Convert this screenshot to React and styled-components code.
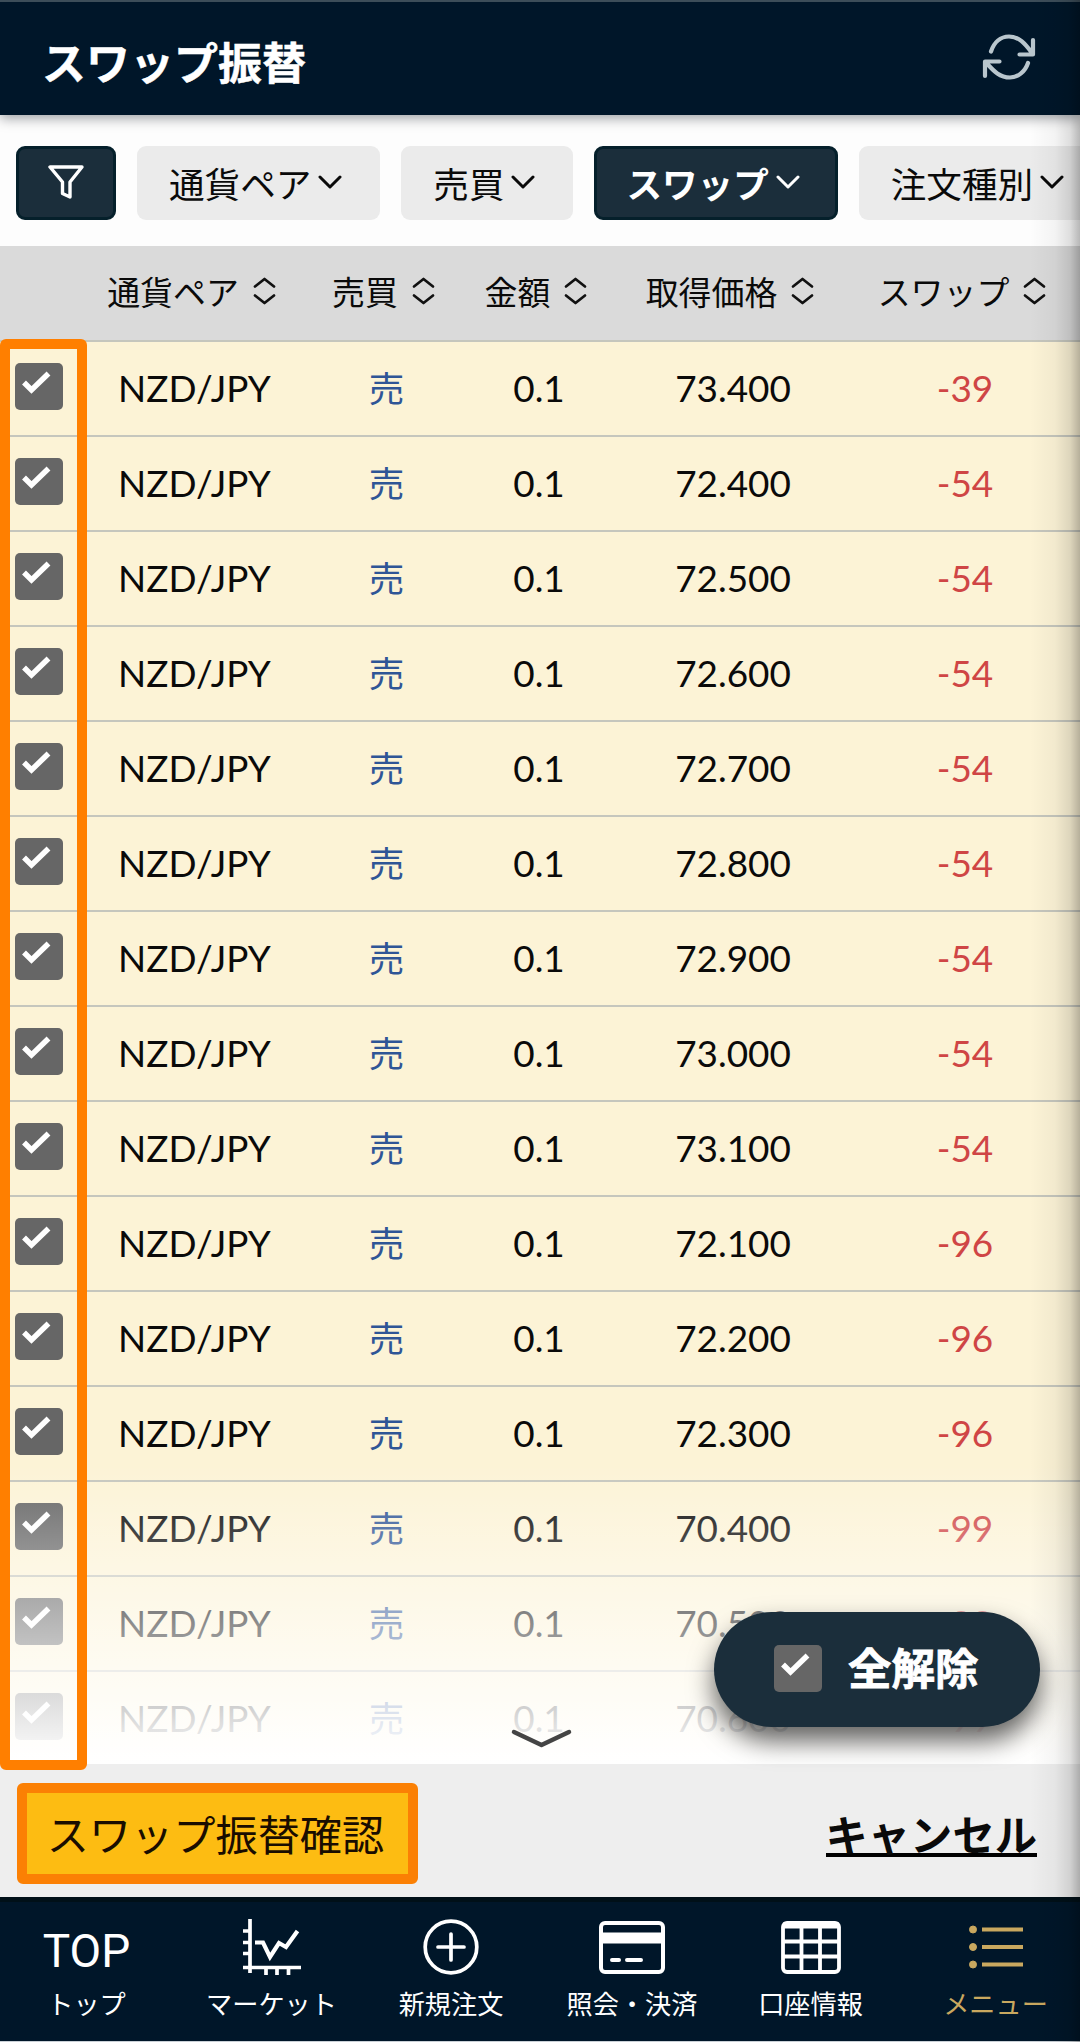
import styled, { createGlobalStyle, css } from "styled-components";

const GlobalStyle = createGlobalStyle`
  * {
    box-sizing: border-box;
  }
  body {
    margin: 0;
    background: #fdfdfd;
    font-family: Lato, "Noto Sans CJK JP", sans-serif;
    color: #0a0a0a;
  }
  button {
    font-family: inherit;
    border: none;
    padding: 0;
    margin: 0;
  }
  svg {
    display: block;
    flex: none;
  }
`;

const Screen = styled.div`
  position: relative;
  width: 1080px;
  height: 2042px;
  overflow: hidden;
  display: flex;
  flex-direction: column;
`;

// soft shade along the right side of the phone screen
const EdgeShade = styled.div`
  position: absolute;
  top: 0;
  right: 0;
  bottom: 0;
  width: 50px;
  pointer-events: none;
  background: linear-gradient(
    to right,
    rgba(0, 0, 0, 0) 0%,
    rgba(0, 0, 0, 0.04) 50%,
    rgba(0, 0, 0, 0.12) 80%,
    rgba(0, 0, 0, 0.28) 100%
  );
`;

// * header
const Header = styled.header`
  position: relative;
  height: 115px;
  flex: none;
  display: flex;
  justify-content: space-between;
  align-items: center;
  padding: 0 44px 4px 42px;
  background: #001629;
  border-top: 2px solid #3c4d59;
  box-shadow: 0 3px 12px rgba(0, 10, 20, 0.4);
`;

const Title = styled.h1`
  margin: 13px 0 0;
  font-size: 44px;
  line-height: 60px;
  font-weight: 700;
  color: #ffffff;
  -webkit-text-stroke: 0.5px #ffffff;
`;

// * filter chips
const FilterBar = styled.div`
  height: 131px;
  flex: none;
  display: flex;
  gap: 21px;
  padding: 31px 0 0 16px;
`;

const Chip = styled.button`
  flex: none;
  height: 74px;
  display: flex;
  align-items: center;
  gap: 7px;
  padding: 3px 38px 0 32px;
  border-radius: 9px;
  font-size: 35.6px;
  line-height: 50px;
  color: #0a0a0a;
  background: #ebebeb;
  ${({ $active }) =>
    $active &&
    css`
      color: #ffffff;
      font-weight: 700;
      background: #1b2e3b;
      border: 3px solid #05202b;
      padding: 3px 35px 0 29px;
    `}

  svg {
    margin-top: -5px;
  }
`;

const FunnelChip = styled(Chip)`
  width: 100px;
  padding: 3px 0 0;
  justify-content: center;
`;

// * positions table
const columns = css`
  display: grid;
  grid-template-columns: 78px 233px 151px 154px 234px 230px;
`;

const HeadRow = styled.div`
  ${columns}
  height: 94px;
  flex: none;
  background: #dadada;
`;

const HeadCell = styled.div`
  display: flex;
  align-items: center;
  justify-content: center;
  gap: 14px;
  padding: 0 6px 5px 0;
  font-size: 32.9px;
  white-space: nowrap;
`;

const Body = styled.div`
  position: relative;
  height: 1424px;
  flex: none;
`;

const Rows = styled.div`
  height: 1424px;
  overflow: hidden;
`;

const Row = styled.div`
  ${columns}
  height: 95px;
  align-items: center;
  background: #fcf3d6;
  border-top: 2px solid #c5c6bd;
`;

const Cell = styled.div`
  text-align: center;
  font-size: 36.9px;
  line-height: 50px;
  padding-bottom: 1px;
  color: ${({ $color }) => $color || "#0a0a0a"};
`;

const SideCell = styled(Cell)`
  font-size: 35.5px;
  padding: 1px 0 0;
`;

const CheckCell = styled.div`
  padding: 0 0 5px 15px;
`;

const CheckBox = styled.span`
  display: block;
  width: 48px;
  height: 47px;
  border-radius: 5px;
  background: #666666;
`;

const FadeOut = styled.div`
  position: absolute;
  left: 0;
  right: 0;
  bottom: 0;
  height: 300px;
  background: linear-gradient(to bottom, rgba(255, 255, 255, 0), #ffffff);
`;

const MoreArrow = styled.div`
  position: absolute;
  left: 511px;
  bottom: 16px;
`;

const Marker = styled.div`
  position: absolute;
  left: 0;
  top: -1px;
  width: 87px;
  height: 1431px;
  border: 10px solid #ff7f00;
  border-radius: 6px;
`;

const ClearAll = styled.button`
  position: absolute;
  left: 714px;
  bottom: 37px;
  width: 326px;
  height: 115px;
  display: flex;
  align-items: center;
  gap: 26px;
  padding: 0 0 3px 60px;
  border-radius: 58px;
  background: #1b2e3b;
  color: #ffffff;
  font-size: 43.5px;
  line-height: 60px;
  font-weight: 700;
  -webkit-text-stroke: 0.8px #ffffff;
  box-shadow: 0 14px 26px rgba(0, 0, 0, 0.62);
`;

// * bottom actions
const ActionBar = styled.div`
  height: 133px;
  flex: none;
  display: flex;
  justify-content: space-between;
  padding: 19px 43px 0 17px;
  background: #eeeeee;
`;

const ConfirmButton = styled.button`
  width: 401px;
  height: 101px;
  border: 10px solid #fb8004;
  border-radius: 6px;
  padding: 2px 4px 0 0;
  background: #fdbc12;
  color: #1a0d00;
  font-size: 42.2px;
  line-height: 60px;
  white-space: nowrap;
`;

const CancelLink = styled.a`
  align-self: flex-start;
  margin-top: 27px;
  height: 47px;
  font-size: 42.3px;
  line-height: 50px;
  font-weight: 700;
  border-bottom: 4px solid #000000;
`;

// * tab bar
const NavBar = styled.nav`
  height: 145px;
  flex: none;
  display: grid;
  grid-template-columns: 173px 197px 162px 200px 157px 191px;
  background: #001629;
  border-top: 5px solid #001018;
  border-bottom: 1px solid #c9d0d6;
`;

const NavItem = styled.a`
  display: flex;
  flex-direction: column;
  align-items: center;
  color: ${({ $current }) => ($current ? "#c9a85f" : "#ffffff")};

  &:last-child {
    padding-left: 22px;
  }
`;

const NavIcon = styled.span`
  height: 88px;
  display: flex;
  align-items: center;
  justify-content: center;
  padding-top: 2px;
`;

const NavWord = styled.span`
  font-family: Roboto, sans-serif;
  font-size: 46px;
  line-height: 50px;
  padding-top: 7px;
`;

const NavLabel = styled.span`
  font-size: 26.2px;
  line-height: 28px;
  white-space: nowrap;
`;

const Funnel = () => (
  <svg width="36" height="34" viewBox="0 0 36 34" fill="none" stroke="#fff" strokeWidth="3.4" strokeLinejoin="round">
    <path d="M2 2H34L22 17V32L14.500 28.500V17Z" />
  </svg>
);

const ChevronDown = () => (
  <svg width="24" height="14" viewBox="0 0 24 14" fill="none" stroke="currentColor" strokeWidth="3" strokeLinecap="round" strokeLinejoin="round">
    <path d="M2 2L12 12L22 2" />
  </svg>
);

const SortIcon = () => (
  <svg width="23" height="28" viewBox="0 0 23 28" fill="none" stroke="#111" strokeWidth="2.700" strokeLinecap="round" strokeLinejoin="round">
    <path d="M2 9.500L11.500 2L21 9.500M2 18.500L11.500 26L21 18.500" />
  </svg>
);

const Refresh = () => (
  <svg width="54" height="46" viewBox="0 0 54 46" fill="none" stroke="#b9c6cd" strokeWidth="4.200" strokeLinecap="round" strokeLinejoin="round">
    <path d="M9 17.500C12 8.500 18.500 2.500 27 2.500C37 2.500 43 9.500 50 19M51 6V20.500H37.500" />
    <path d="M46 29C43 38 35.500 43.500 28 43.500C18 43.500 12 37.500 4.500 29M3 42V27.500H17.500" />
  </svg>
);

const Check = () => (
  <CheckBox>
    <svg width="48" height="47" viewBox="0 0 48 47" fill="none" stroke="#fff" strokeWidth="5.500">
      <path d="M9 19.500L16.500 27L33.500 10.500" />
    </svg>
  </CheckBox>
);

const ChartIcon = () => (
  <svg width="58" height="56" viewBox="0 0 58 56" fill="none" stroke="currentColor" strokeWidth="3.700">
    <path d="M7 0V54M0 48.500H58" />
    <path d="M0 12H7M0 23.500H7M0 34.500H7M23 48V56M34 48V56M45.500 48V56" />
    <path d="M12 23.500H20L27 38L36 24L43 28L54.500 12" strokeWidth="4.200" />
  </svg>
);

const PlusIcon = () => (
  <svg width="56" height="56" viewBox="0 0 56 56" fill="none" stroke="currentColor" strokeWidth="3.700" strokeLinecap="round">
    <circle cx="28" cy="28" r="25.800" />
    <path d="M28 15V41M15 28H41" />
  </svg>
);

const CardIcon = () => (
  <svg width="66" height="53" viewBox="0 0 66 53" fill="none" stroke="currentColor" strokeWidth="4">
    <rect x="2" y="2" width="62" height="49" rx="4" />
    <path d="M2 17H64" strokeWidth="11" />
    <path d="M13 39H20M28 39H42" strokeLinecap="round" />
  </svg>
);

const TableIcon = () => (
  <svg width="60" height="53" viewBox="0 0 60 53" fill="none" stroke="currentColor" strokeWidth="3.800">
    <rect x="2" y="2" width="56" height="49" rx="4" />
    <path d="M2 4.500H58" strokeWidth="6" />
    <path d="M2 20.500H58M2 35.500H58M20.500 2V51M39 2V51" />
  </svg>
);

const ListIcon = () => (
  <svg width="56" height="44" viewBox="0 0 56 44" fill="currentColor" stroke="currentColor">
    <circle cx="5" cy="4.500" r="3.500" />
    <circle cx="5" cy="22" r="3.500" />
    <circle cx="5" cy="39.500" r="3.500" />
    <path d="M14 4.500H55M14 22H55M14 39.500H55" strokeWidth="4" />
  </svg>
);

const chips = [
  { label: "通貨ペア" },
  { label: "売買" },
  { label: "スワップ", active: true },
  { label: "注文種別" },
];

const headings = ["通貨ペア", "売買", "金額", "取得価格", "スワップ"];

const positions = [
  ["73.400", "-39"],
  ["72.400", "-54"],
  ["72.500", "-54"],
  ["72.600", "-54"],
  ["72.700", "-54"],
  ["72.800", "-54"],
  ["72.900", "-54"],
  ["73.000", "-54"],
  ["73.100", "-54"],
  ["72.100", "-96"],
  ["72.200", "-96"],
  ["72.300", "-96"],
  ["70.400", "-99"],
  ["70.500", "-99"],
  ["70.600", "-99"],
];

const navItems = [
  { label: "トップ", icon: <NavWord>TOP</NavWord> },
  { label: "マーケット", icon: <ChartIcon /> },
  { label: "新規注文", icon: <PlusIcon /> },
  { label: "照会・決済", icon: <CardIcon /> },
  { label: "口座情報", icon: <TableIcon /> },
  { label: "メニュー", icon: <ListIcon />, current: true },
];

export default function App() {
  return (
    <Screen>
      <GlobalStyle />
      <Header>
        <Title>スワップ振替</Title>
        <Refresh />
      </Header>

      <FilterBar>
        <FunnelChip $active>
          <Funnel />
        </FunnelChip>
        {chips.map(({ label, active }) => (
          <Chip key={label} $active={active}>
            {label}
            <ChevronDown />
          </Chip>
        ))}
      </FilterBar>

      <HeadRow>
        <span />
        {headings.map((label) => (
          <HeadCell key={label}>
            {label}
            <SortIcon />
          </HeadCell>
        ))}
      </HeadRow>

      <Body>
        <Rows>
          {positions.map(([price, swap]) => (
            <Row key={price}>
              <CheckCell>
                <Check />
              </CheckCell>
              <Cell>NZD/JPY</Cell>
              <SideCell $color="#2f5596">売</SideCell>
              <Cell>0.1</Cell>
              <Cell>{price}</Cell>
              <Cell $color="#cf4545">{swap}</Cell>
            </Row>
          ))}
        </Rows>
        <FadeOut />
        <MoreArrow>
          <svg width="61" height="19" viewBox="0 0 61 19" fill="none" stroke="#444" strokeWidth="4.500" strokeLinecap="round" strokeLinejoin="round">
            <path d="M3 3L30.500 16L58 3" />
          </svg>
        </MoreArrow>
        <Marker />
        <ClearAll>
          <Check />
          全解除
        </ClearAll>
      </Body>

      <ActionBar>
        <ConfirmButton>スワップ振替確認</ConfirmButton>
        <CancelLink>キャンセル</CancelLink>
      </ActionBar>

      <NavBar>
        {navItems.map(({ label, icon, current }) => (
          <NavItem key={label} $current={current}>
            <NavIcon>{icon}</NavIcon>
            <NavLabel>{label}</NavLabel>
          </NavItem>
        ))}
      </NavBar>
      <EdgeShade />
    </Screen>
  );
}
